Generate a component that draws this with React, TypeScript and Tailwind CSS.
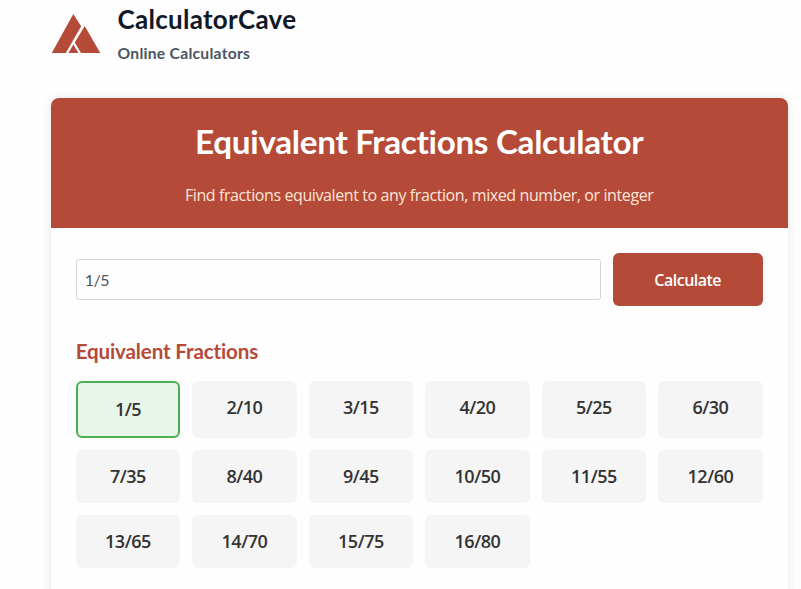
import React from "react";

const fractions = Array.from({ length: 16 }, (_, i) => `${i + 1}/${(i + 1) * 5}`);

const Logo: React.FC = () => (
  <svg className="w-[50px] h-[42px]" viewBox="0 0 50 42" fill="#b44a37">
    <path d="M22.3 1 L30.2 13.2 L14.8 40 H0.8 Z" />
    <path d="M33.7 13 L49.3 40 H30 L23.8 29.5 Z" />
    <path d="M22.4 31.5 L27.4 40 H17.4 Z" />
  </svg>
);

const Header: React.FC = () => {
  return (
    <header className="flex h-[98px] pl-[51px]">
      <div className="pt-[13px]">
        <Logo />
      </div>
      <div className="ml-[16.5px] font-['Lato',sans-serif]">
        <div className="text-[26px] leading-[38px] font-bold tracking-[0.27px] text-[#111827]">
          CalculatorCave
        </div>
        <div className="text-[15.7px] leading-[30px] font-bold tracking-[0.25px] text-[#4b5563]">
          Online Calculators
        </div>
      </div>
    </header>
  );
};

const App: React.FC = () => {
  return (
    <div className="h-[589px] w-[801px] overflow-hidden bg-[#fefefe]">
      <Header />
      <main className="ml-[50.7px] w-[737px] h-[600px] rounded-lg bg-[#fefefe] shadow-[0_0_10px_rgba(0,0,0,0.1)]">
        {/* Title banner */}
        <div className="h-[130px] rounded-t-lg bg-[#b44a37] pt-[21px] text-center">
          <h1 className="font-['Lato',sans-serif] text-[33.3px] leading-[44px] font-bold tracking-[-0.34px] text-white">
            Equivalent Fractions Calculator
          </h1>
          <p className="mt-[20px] font-['Open_Sans','Noto_Sans',sans-serif] text-[16px] leading-6 tracking-[-0.4px] text-[#ffe6d8]">
            Find fractions equivalent to any fraction, mixed number, or integer
          </p>
        </div>

        <div className="p-[25px]">
          <div className="flex items-center gap-3">
            <input
              type="text"
              defaultValue="1/5"
              className="h-[41px] flex-1 rounded-[3px] border border-[#d1d5db] px-2 font-['Lato',sans-serif] text-base tracking-[-0.5px] text-[#4b5563] outline-none"
            />
            <button className="h-[53px] w-[150px] rounded-md bg-[#b44a37] font-['Open_Sans','Noto_Sans',sans-serif] text-[16px] font-semibold tracking-[-0.5px] text-white">
              Calculate
            </button>
          </div>

          {/* Results */}
          <h2 className="mt-[30px] font-['Lato',sans-serif] text-[20.6px] leading-[30px] font-bold tracking-[-0.15px] text-[#b44a37]">
            Equivalent Fractions
          </h2>
          <div className="mt-[15px] grid grid-cols-6 gap-3 font-['Open_Sans','Noto_Sans',sans-serif] text-[18px] leading-[23px] font-semibold tracking-[-0.5px] text-[#333333]">
            {fractions.map((fraction, i) => (
              <div
                key={fraction}
                className={
                  i === 0
                    ? "rounded-md border-2 border-[#4caf50] bg-[#e8f5e9] p-[15px] text-center"
                    : "rounded-md bg-[#f5f5f5] p-[15px] text-center"
                }
              >
                {fraction}
              </div>
            ))}
          </div>
        </div>
      </main>
    </div>
  );
};

export default App;
